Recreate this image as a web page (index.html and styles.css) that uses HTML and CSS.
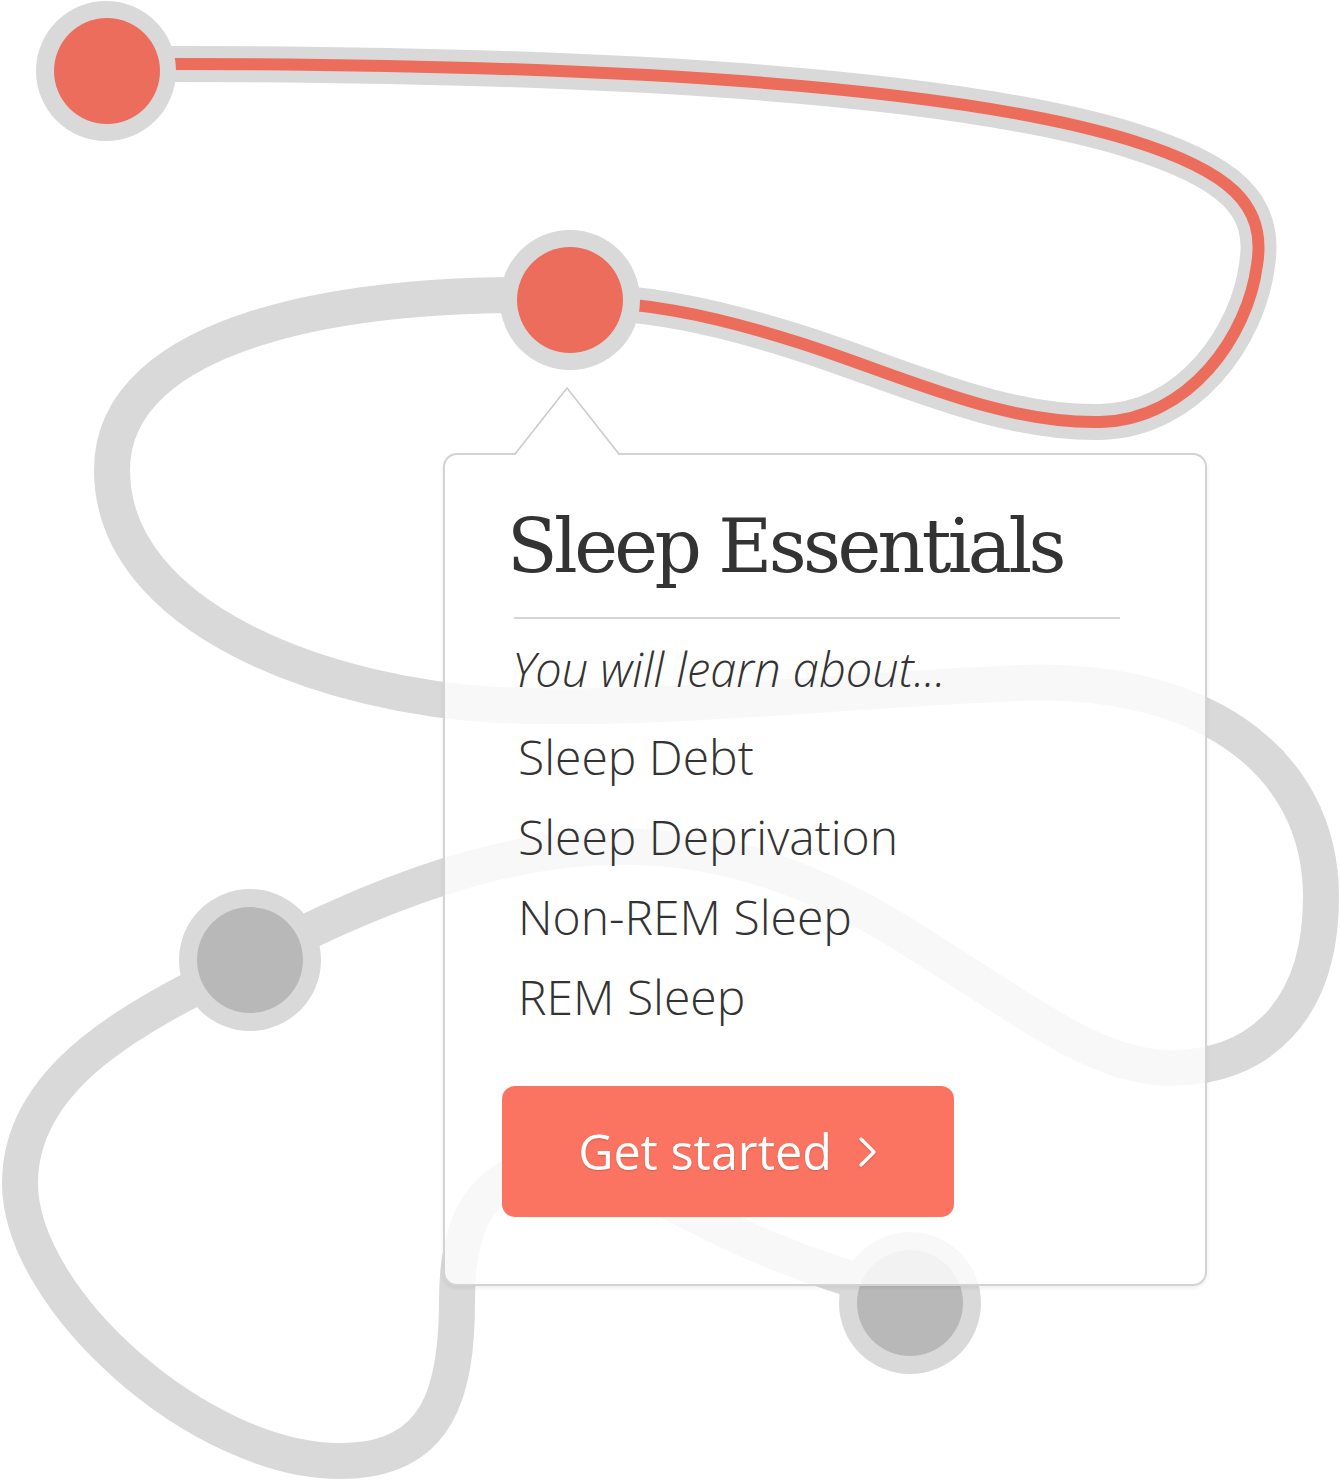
FILE: index.html
```html
<!DOCTYPE html>
<html lang="en">
<head>
<meta charset="utf-8">
<title>Sleep Essentials</title>
<link rel="stylesheet" href="styles.css">
</head>
<body>
<div class="stage">
  <svg class="map" width="1340" height="1480" viewBox="0 0 1340 1480" xmlns="http://www.w3.org/2000/svg">
    <g fill="none" stroke="#d9d9d9" stroke-width="36" stroke-linecap="round" stroke-linejoin="round">
      <path d="M110,64 C600,62 950,85 1130,140 C1230,171 1267,205 1257,265 C1248,335 1190,420 1100,422 C1000,424 900,375 800,343 C700,311 640,303 570,300"/>
      <path d="M570,296 C350,288 112,330 112,470 C112,620 330,697 500,705 C650,712 850,690 1000,684 C1200,670 1321,760 1321,897 C1321,1010 1260,1068 1170,1068 C1100,1068 1040,1020 900,932 C760,846 620,820 443,877 C360,904 300,935 250,960 C150,1010 20,1070 20,1183 C20,1300 200,1461 340,1461 C440,1461 457,1390 457,1300 C457,1210 490,1165 570,1165 C640,1170 720,1250 910,1295"/>
    </g>
    <path d="M110,64 C600,62 950,85 1130,140 C1230,171 1267,205 1257,265 C1248,335 1190,420 1100,422 C1000,424 900,375 800,343 C700,311 640,303 570,300" fill="none" stroke="#ec6d5b" stroke-width="12" stroke-linecap="round"/>
    <g>
      <circle cx="106" cy="71" r="70" fill="#d9d9d9"/>
      <circle cx="107" cy="71" r="53" fill="#ec6d5b"/>
      <circle cx="570" cy="300" r="70" fill="#d9d9d9"/>
      <circle cx="570" cy="300" r="53" fill="#ec6d5b"/>
      <circle cx="250" cy="960" r="71" fill="#d9d9d9"/>
      <circle cx="250" cy="960" r="53" fill="#b8b8b8"/>
      <circle cx="910" cy="1303" r="71" fill="#d9d9d9"/>
      <circle cx="910" cy="1303" r="53" fill="#b8b8b8"/>
    </g>
  </svg>

  <div class="card">
    <h1 class="card-title">Sleep Essentials</h1>
    <hr class="card-rule">
    <p class="card-lead">You will learn about...</p>
    <ul class="topics">
      <li>Sleep Debt</li>
      <li>Sleep Deprivation</li>
      <li>Non-REM Sleep</li>
      <li>REM Sleep</li>
    </ul>
    <button class="cta" type="button">
      <span class="cta-label">Get started</span>
      <svg class="cta-chevron" width="20" height="32" viewBox="0 0 20 32" xmlns="http://www.w3.org/2000/svg"><path d="M3,3 L16,16 L3,29" fill="none" stroke="#ffffff" stroke-width="3.2" stroke-linecap="round" stroke-linejoin="round"/></svg>
    </button>
  </div>

  <svg class="pointer" width="108" height="72" viewBox="0 0 108 72" xmlns="http://www.w3.org/2000/svg">
    <polygon points="54,3 3,68 3,71 105,71 105,68" fill="#ffffff"/>
    <polyline points="2,68 54,2 106,68" fill="none" stroke="#cccccc" stroke-width="1.6"/>
  </svg>
</div>
</body>
</html>
```

FILE: styles.css
```css
html, body {
  margin: 0;
  padding: 0;
  background: #ffffff;
}

.stage {
  position: relative;
  width: 1340px;
  height: 1480px;
  overflow: hidden;
  font-family: "Open Sans", "Liberation Sans", sans-serif;
  color: #333333;
}

.map {
  position: absolute;
  left: 0;
  top: 0;
  display: block;
}

.card {
  position: absolute;
  left: 443px;
  top: 453px;
  width: 764px;
  height: 833px;
  box-sizing: border-box;
  border: 2px solid #d3d3d3;
  border-radius: 14px;
  background: rgba(255, 255, 255, 0.82);
  box-shadow: 0 2px 4px rgba(0, 0, 0, 0.07);
  padding: 54px 0 0 67px;
  display: flex;
  flex-direction: column;
  align-items: flex-start;
}

.card-title {
  margin: 0 0 0 -5px;
  font-family: "DejaVu Serif", "Liberation Serif", serif;
  font-weight: normal;
  font-size: 74px;
  line-height: 75px;
  letter-spacing: -3.6px;
  color: #333333;
  white-space: nowrap;
}

.card-rule {
  margin: 33px 0 0 2px;
  width: 606px;
  height: 0;
  border: 0;
  border-top: 2px solid #d6d6d6;
}

.card-lead {
  margin: 19px 0 0 0;
  font-size: 47px;
  line-height: 62px;
  font-style: italic;
  font-weight: 300;
  color: #333333;
  white-space: nowrap;
}

.topics {
  list-style: none;
  margin: 17px 0 0 0;
  padding: 0 0 0 6px;
}

.topics li {
  font-size: 48px;
  line-height: 80px;
  font-weight: 300;
  color: #333333;
  white-space: nowrap;
}

.cta {
  margin: 49px 0 0 -10px;
  width: 452px;
  height: 131px;
  border: 0;
  border-radius: 13px;
  background: #fb7462;
  color: #ffffff;
  font-family: "Open Sans", "Liberation Sans", sans-serif;
  font-size: 48.5px;
  font-weight: 400;
  display: flex;
  align-items: center;
  justify-content: center;
  gap: 26px;
  padding: 0;
  cursor: pointer;
}

.cta-label {
  text-shadow: 0 1px 2px rgba(0, 0, 0, 0.18);
  line-height: 1;
}

.cta-chevron {
  display: block;
  filter: drop-shadow(0 1px 1px rgba(0, 0, 0, 0.15));
}

.pointer {
  position: absolute;
  left: 513px;
  top: 386px;
  display: block;
}
```
